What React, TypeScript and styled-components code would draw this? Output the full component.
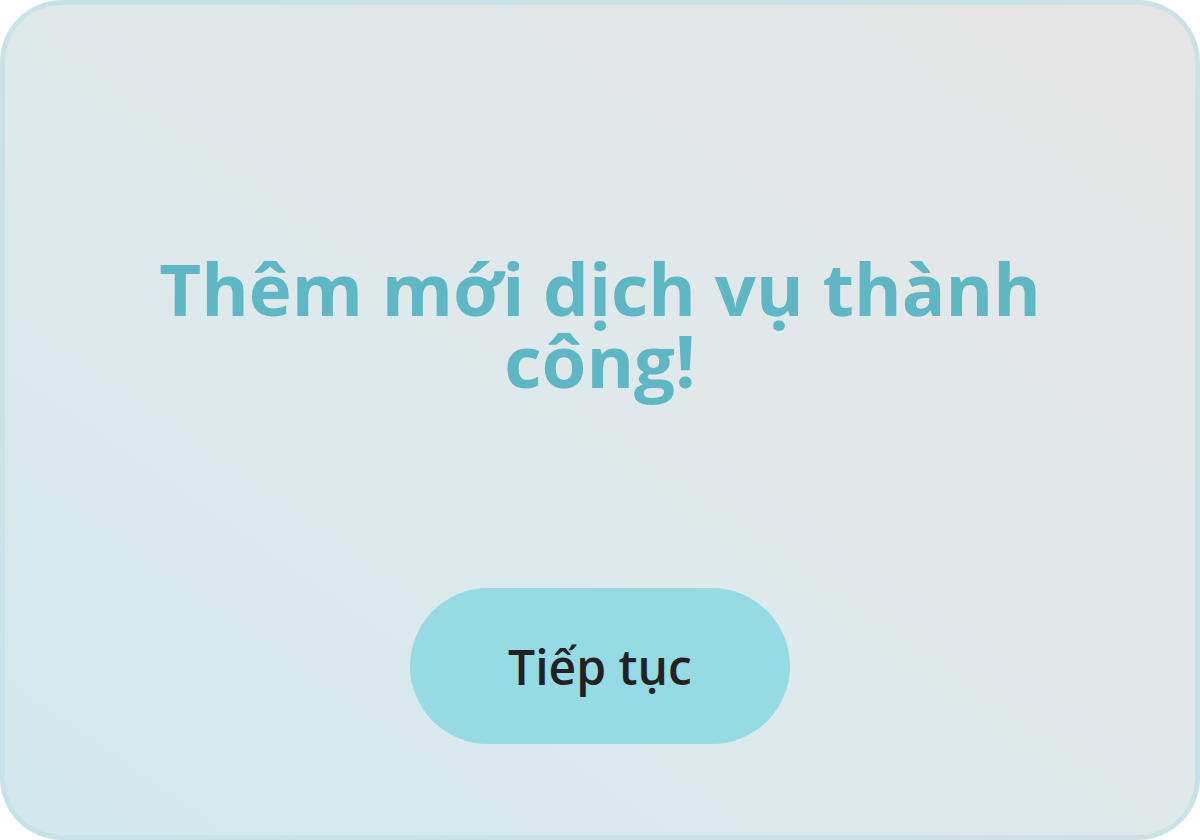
import React from "react";
import styled, { createGlobalStyle } from "styled-components";

const GlobalStyle = createGlobalStyle`
  html, body {
    margin: 0;
    padding: 0;
    background: #ffffff;
  }
  * {
    box-sizing: border-box;
  }
`;

const Card = styled.div`
  width: 1200px;
  height: 840px;
  border-radius: 62px;
  border: 5px solid rgba(180, 222, 230, 0.5);
  background: linear-gradient(
    to top right,
    #d2e8ec 0%,
    #dee9eb 45%,
    #e7e5e5 100%
  );
  display: flex;
  flex-direction: column;
  align-items: center;
  padding-top: 247px;
  font-family: "Open Sans", "Noto Sans", sans-serif;
`;

const Title = styled.h1`
  margin: 0;
  width: 900px;
  text-align: center;
  font-size: 72.5px;
  line-height: 72px;
  font-weight: 700;
  color: #5fb6c4;
`;

const ContinueButton = styled.button`
  margin-top: 192px;
  width: 380px;
  height: 156px;
  border: none;
  border-radius: 78px;
  background: #96dae3;
  color: #222222;
  font-family: "Open Sans", "Noto Sans", sans-serif;
  font-size: 48px;
  font-weight: 600;
  cursor: pointer;
`;

export default function App() {
  return (
    <>
      <GlobalStyle />
      <Card>
        <Title>Thêm mới dịch vụ thành công!</Title>
        <ContinueButton>Tiếp tục</ContinueButton>
      </Card>
    </>
  );
}
